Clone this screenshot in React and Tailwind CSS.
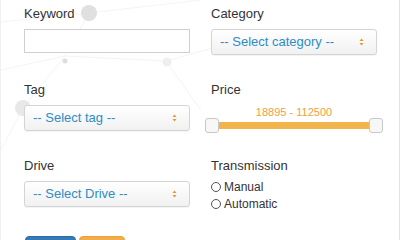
import React from "react";

const font = { fontFamily: '"Liberation Sans", Arial, sans-serif' };

const Caret = () => (
  <svg width="5" height="8" viewBox="0 0 5 8" className="shrink-0">
    <path d="M2.5 0.5 L4.5 3 L0.5 3 Z" fill="#e8952f" />
    <path d="M2.5 7.5 L4.5 5 L0.5 5 Z" fill="#e8952f" />
  </svg>
);

const Select = ({ text }) => (
  <div className="h-[26px] w-[166px] flex items-center justify-between pl-[8px] pr-[12px] rounded-[3px] border border-[#d4d4d4] bg-gradient-to-b from-white to-[#f1f1f1] shadow-[0_1px_1px_rgba(0,0,0,0.05)]">
    <span className="text-[13px] text-[#2f8dc4]">{text}</span>
    <Caret />
  </div>
);

const Label = ({ children }) => (
  <div className="text-[13px] leading-[18px] text-[#333] mb-[6px]">{children}</div>
);

const Radio = ({ label }) => (
  <label className="flex items-center gap-[3px] h-[17px] text-[12px] text-[#333]">
    <span className="w-[10px] h-[10px] rounded-full border border-[#555] bg-white" />
    {label}
  </label>
);

const Background = () => (
  <svg className="absolute inset-0 pointer-events-none" width="400" height="240">
    <g stroke="#f4f4f4" strokeWidth="1" fill="none">
      <line x1="0" y1="22" x2="88" y2="13" />
      <line x1="88" y1="13" x2="64" y2="56" />
      <line x1="64" y1="56" x2="165" y2="61" />
      <line x1="64" y1="56" x2="22" y2="108" />
      <line x1="0" y1="70" x2="64" y2="56" />
      <line x1="165" y1="61" x2="200" y2="110" />
      <line x1="88" y1="13" x2="200" y2="0" />
      <line x1="22" y1="108" x2="0" y2="150" />
      <line x1="165" y1="61" x2="240" y2="40" />
    </g>
    <circle cx="88" cy="13" r="8" fill="#e0e0e0" />
    <circle cx="64" cy="61" r="2.5" fill="#dedede" />
    <circle cx="166" cy="62" r="4.5" fill="#eeeeee" />
    <circle cx="22" cy="108" r="8" fill="#e8e8e8" />
  </svg>
);

export default function App() {
  return (
    <div
      style={font}
      className="relative w-[400px] h-[240px] overflow-hidden bg-white border-l border-l-[#f0f0f0]"
    >
      <Background />
      <div className="absolute right-0 top-0 bottom-0 w-px bg-[#e3e3e3]" />
      <div className="relative pl-[23px] pt-[5px]">
        <div className="grid grid-cols-[166px_166px] gap-x-[21px] gap-y-[26px]">
          <div>
            <Label>Keyword</Label>
            <div className="h-[24px] w-[166px] border border-[#cfcfcf] bg-white" />
          </div>
          <div>
            <Label>Category</Label>
            <Select text="-- Select category --" />
          </div>

          <div>
            <Label>Tag</Label>
            <Select text="-- Select tag --" />
          </div>
          <div>
            <Label>Price</Label>
            <div className="h-[26px]">
              <div className="text-center text-[11px] leading-[14px] text-[#f0a040]">
                18895 - 112500
              </div>
              <div className="relative h-[15px] -mt-[1px] -ml-[6px] w-[178px]">
                <div className="absolute left-[12px] right-[12px] top-[4px] h-[7px] bg-[#f2b44d]" />
                <div className="absolute left-0 top-0 w-[14px] h-[15px] rounded-[3px] border border-[#c8c8c8] bg-[#f7f7f7]" />
                <div className="absolute right-0 top-0 w-[14px] h-[15px] rounded-[3px] border border-[#c8c8c8] bg-[#f7f7f7]" />
              </div>
            </div>
          </div>

          <div>
            <Label>Drive</Label>
            <Select text="-- Select Drive --" />
          </div>
          <div>
            <Label>Transmission</Label>
            <div className="flex flex-col -mt-[3px]">
              <Radio label="Manual" />
              <Radio label="Automatic" />
            </div>
          </div>
        </div>

        <div className="flex gap-[3px] mt-[24px] ml-[1px]">
          <button className="w-[51px] h-[30px] rounded-[4px] bg-[#337ab7] border border-[#2e6da4] text-white text-[12px]">
            Search
          </button>
          <button className="w-[46px] h-[30px] rounded-[4px] bg-[#f0ad4e] border border-[#eea236] text-white text-[12px]">
            Reset
          </button>
        </div>
      </div>
    </div>
  );
}
